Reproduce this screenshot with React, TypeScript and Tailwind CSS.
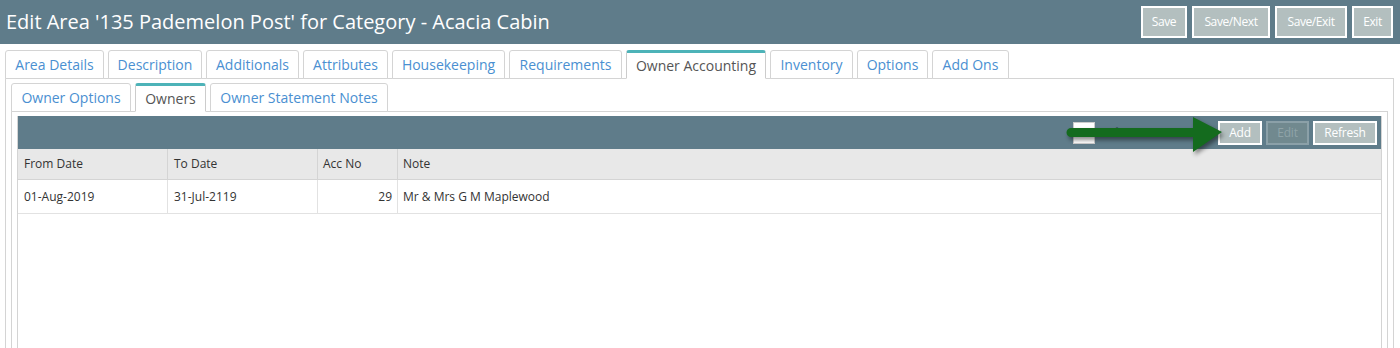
const font = { fontFamily: '"Open Sans", "Liberation Sans", sans-serif' };

function TopBtn({ label, w }: { label: string; w: string }) {
  return (
    <button className={`${w} h-[32px] border-2 border-white bg-[#b3bfbf] text-[12px] tracking-[-0.4px] text-white`}>{label}</button>
  );
}

function Tab({ label, active, w }: { label: string; active?: boolean; w: string }) {
  return (
    <div
      className={`${w} -mb-px flex h-[29px] shrink-0 items-center justify-center rounded-t-[3px] border text-[14px] ${
        active ? "border-[#ccc] border-t-[3px] border-t-[#4db3b8] border-b-white bg-white text-[#555]" : "border-[#d4d4d4] bg-white text-[#4a8fd1]"
      }`}
    >
      {label}
    </div>
  );
}

function GridBtn({ label, disabled, w }: { label: string; disabled?: boolean; w: string }) {
  return (
    <button
      className={`${w} h-[24px] border-2 text-[12px] tracking-[-0.2px] ${
        disabled ? "border-[#8ba0a8] bg-[#71898f] text-[#8fa3a8]" : "border-white bg-[#b3bfbf] text-white"
      }`}
    >
      {label}
    </button>
  );
}

export default function App() {
  const tabs = ["Area Details", "Description", "Additionals", "Attributes", "Housekeeping", "Requirements", "Owner Accounting", "Inventory", "Options", "Add Ons"];
  const widths = ["w-[99px]", "w-[94px]", "w-[93px]", "w-[85px]", "w-[113px]", "w-[113px]", "w-[140px]", "w-[83px]", "w-[71px]", "w-[77px]"];
  return (
    <div style={font} className="h-[348px] w-[1400px] overflow-hidden bg-white">
      <div className="flex h-[44px] items-center justify-between bg-[#5f7c8a] pl-[6px] pr-[7px]">
        <div className="text-[20px] text-white">Edit Area '135 Pademelon Post' for Category - Acacia Cabin</div>
        <div className="flex gap-[5px]">
          <TopBtn label="Save" w="w-[46px]" />
          <TopBtn label="Save/Next" w="w-[78px]" />
          <TopBtn label="Save/Exit" w="w-[72px]" />
          <TopBtn label="Exit" w="w-[41px]" />
        </div>
      </div>

      <div className="pl-[5px] pr-[6px] pt-[6px]">
        <div className="flex gap-[4px]">
          {tabs.map((t, i) => (
            <Tab key={t} label={t} active={t === "Owner Accounting"} w={widths[i]} />
          ))}
        </div>
        <div className="h-[300px] border border-[#d4d4d4] px-[5px] pt-[4px]">
          <div className="flex gap-[4px]">
            <Tab label="Owner Options" w="w-[120px]" />
            <Tab label="Owners" active w="w-[71px]" />
            <Tab label="Owner Statement Notes" w="w-[178px]" />
          </div>
          <div className="h-[300px] border border-[#d4d4d4] px-[5px] pt-[4px]">
            <div className="h-[300px] border-x border-[#d4d4d4]">
              <div className="relative flex h-[33px] items-center justify-end gap-[4px] bg-[#5f7c8a] pr-[4px]">
                <div className="absolute left-[1055px] top-[6px] flex items-center gap-[6px]">
                  <div className="h-[22px] w-[22px] border border-[#ccc] bg-white" />
                  <span className="text-[13px] font-bold text-[#3b5561]">Print Statement</span>
                </div>
                <svg className="absolute left-[1048px] top-0 h-[38px] w-[160px] drop-shadow-[2px_3px_2px_rgba(0,0,0,0.45)]" viewBox="0 0 160 38">
                  <path d="M5 12 L127 12 L127 1 L156 16 L127 36 L127 21 L5 21 A4.5 4.5 0 0 1 5 12 Z" fill="#146b1e" />
                </svg>
                <GridBtn label="Add" w="w-[44px]" />
                <GridBtn label="Edit" disabled w="w-[43px]" />
                <GridBtn label="Refresh" w="w-[64px]" />
              </div>
              <div className="grid grid-cols-[150px_150px_80px_1fr] text-[12px] text-[#333]">
                <div className="flex h-[31px] items-center border-b border-r border-[#d4d4d4] bg-[#e8e8e8] px-[6px]">From Date</div>
                <div className="flex h-[31px] items-center border-b border-r border-[#d4d4d4] bg-[#e8e8e8] px-[6px]">To Date</div>
                <div className="flex h-[31px] items-center border-b border-r border-[#d4d4d4] bg-[#e8e8e8] px-[5px]">Acc No</div>
                <div className="flex h-[31px] items-center border-b border-[#d4d4d4] bg-[#e8e8e8] px-[5px]">Note</div>
                <div className="flex h-[34px] items-center border-b border-r border-[#e2e2e2] px-[6px]">01-Aug-2019</div>
                <div className="flex h-[34px] items-center border-b border-r border-[#e2e2e2] px-[6px]">31-Jul-2119</div>
                <div className="flex h-[34px] items-center justify-end border-b border-r border-[#e2e2e2] px-[5px]">29</div>
                <div className="flex h-[34px] items-center border-b border-[#e2e2e2] px-[5px]">Mr &amp; Mrs G M Maplewood</div>
              </div>
            </div>
          </div>
        </div>
      </div>
    </div>
  );
}
